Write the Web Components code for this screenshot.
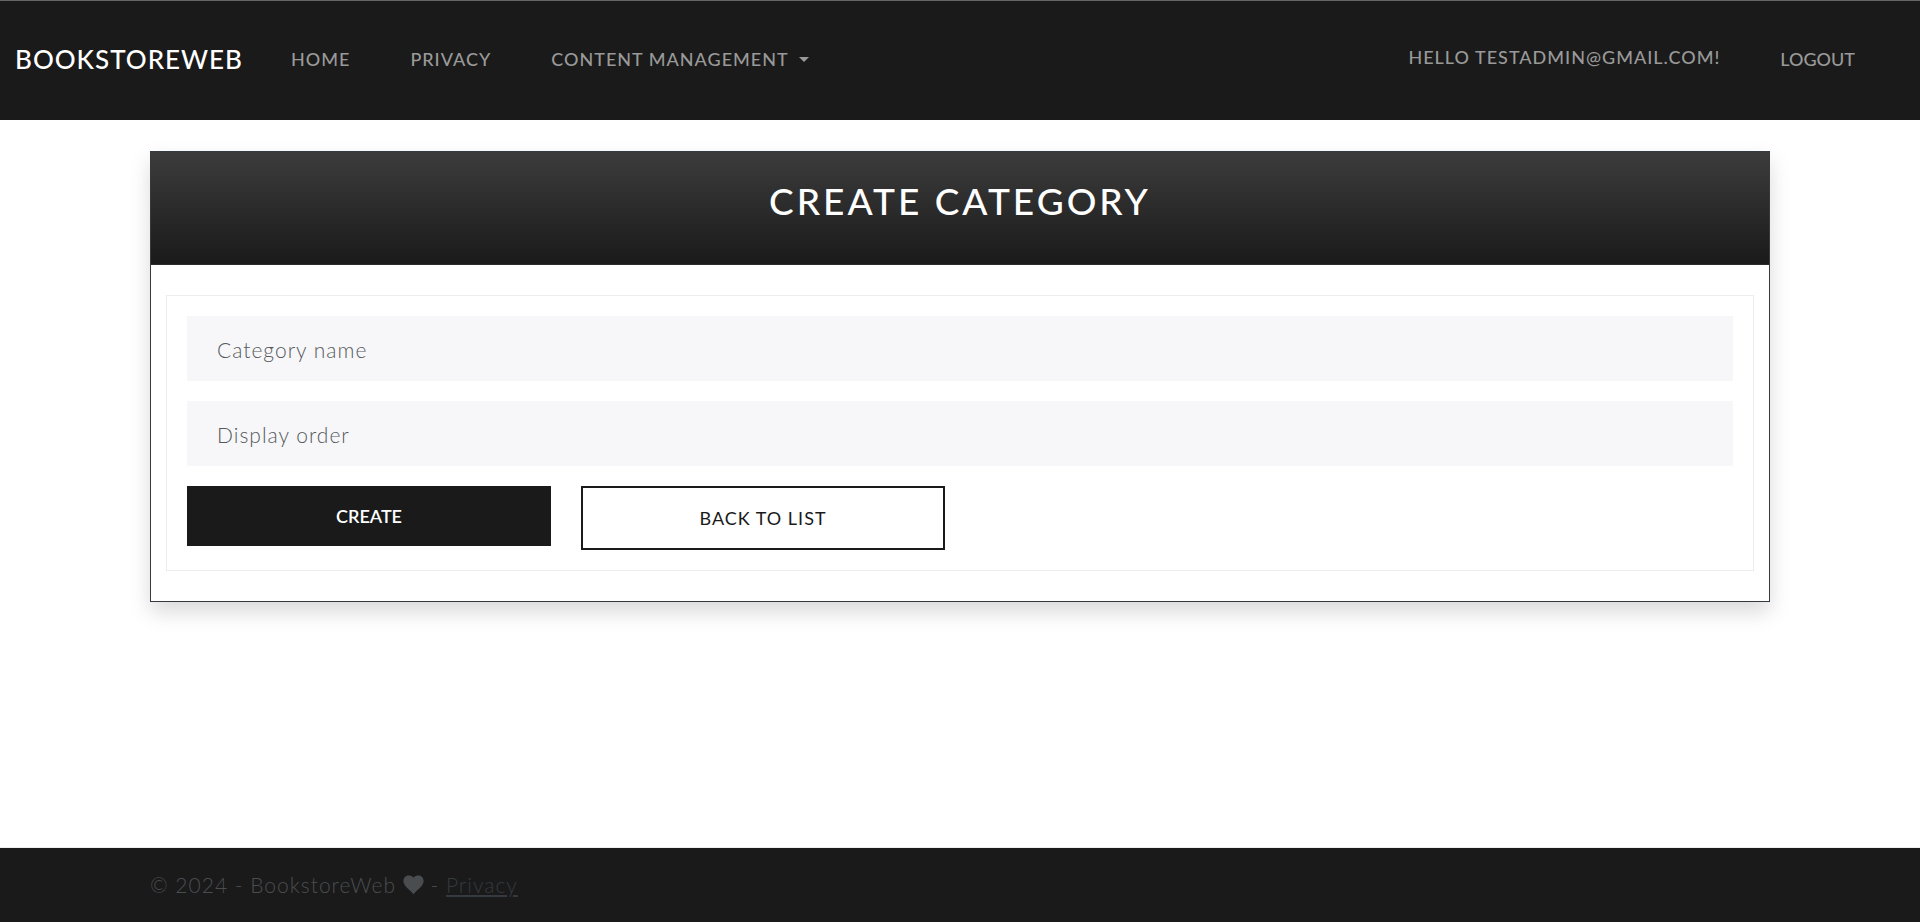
<!DOCTYPE html>
<html lang="en">
<head>
<meta charset="utf-8">
<meta name="viewport" content="width=device-width, initial-scale=1">
<title>Create Category - BookstoreWeb</title>
<style>
  :root { --dark: #1a1a1a; --muted: #999; --slate: #343a40; --family: Lato, "Open Sans", sans-serif; }
  html { height: 100%; }
  body { margin: 0; min-height: 100%; background: #fff; color: #55595c; font: 300 21px/30px var(--family); }
</style>
</head>
<body>
<store-page>
  <store-header slot="header" brand="BOOKSTOREWEB">
    <store-nav-link href="#home">HOME</store-nav-link>
    <store-nav-link href="#privacy">PRIVACY</store-nav-link>
    <store-nav-link href="#content" menu>CONTENT MANAGEMENT</store-nav-link>
    <store-nav-link slot="account" href="#profile" raised>HELLO TESTADMIN@GMAIL.COM!</store-nav-link>
    <store-nav-link slot="account" action>LOGOUT</store-nav-link>
  </store-header>
  <store-card heading="CREATE CATEGORY">
    <category-form></category-form>
  </store-card>
  <store-footer slot="footer"></store-footer>
</store-page>
<script>
class StoreElement extends HTMLElement {
  constructor() {
    super();
    this.attachShadow({ mode: 'open' });
  }
  connectedCallback() {
    this.shadowRoot.innerHTML = '<style>*{box-sizing:border-box}</style>' + this.render();
  }
}

customElements.define('store-page', class extends StoreElement {
  render() {
    return `<style>
      :host { display: flex; flex-direction: column; min-height: 100vh; }
      main { flex: 1; padding: 31px 150px; }
    </style>
    <slot name="header"></slot><main><slot></slot></main><slot name="footer"></slot>`;
  }
});

customElements.define('store-header', class extends StoreElement {
  render() {
    return `<style>
      :host { display: block; background: var(--dark); border-top: 1px solid #666; }
      nav { display: flex; align-items: center; padding: 24px 35px 24px 15px; }
      .brand { color: #fff; font-size: 26px; font-weight: 500; line-height: 36px; letter-spacing: 1px; text-decoration: none; margin-right: 18px; padding-bottom: 4px; }
      .links { display: flex; align-items: center; }
      .account { margin-left: auto; }
    </style>
    <nav>
      <a class="brand" href="#home">${this.getAttribute('brand')}</a>
      <div class="links"><slot></slot></div>
      <div class="links account"><slot name="account"></slot></div>
    </nav>`;
  }
});

customElements.define('store-nav-link', class extends StoreElement {
  render() {
    const style = `<style>
      :host { display: block; }
      a, button { display: flex; align-items: center; gap: 10px; color: var(--muted); font: 500 18px/27px var(--family); padding: 21px 30px 23px; text-decoration: none; white-space: nowrap; }
      a { letter-spacing: 1px; }
      button { background: none; border: 0; letter-spacing: 0; }
      :host([raised]) a { padding: 19px 30px 25px; }
      .caret { border: 5px solid transparent; border-top-color: currentColor; border-bottom: 0; }
    </style>`;
    if (this.hasAttribute('action')) return style + '<button type="button"><slot></slot></button>';
    const caret = this.hasAttribute('menu') ? '<span class="caret"></span>' : '';
    return `${style}<a href="${this.getAttribute('href')}"><slot></slot>${caret}</a>`;
  }
});

customElements.define('store-card', class extends StoreElement {
  render() {
    return `<style>
      :host { display: block; border: 1px solid var(--slate); background: #fff; box-shadow: 0 10px 20px rgba(0, 0, 0, .15); }
      header { padding: 25px 30px 39px; text-align: center; background: linear-gradient(#3c3c3c, var(--dark)); border-bottom: 1px solid #2c2c2c; }
      h1 { margin: 0; color: #fff; font-size: 37px; font-weight: 500; line-height: 48px; letter-spacing: 3px; }
      .body { padding: 30px 15px; }
    </style>
    <header><h1>${this.getAttribute('heading')}</h1></header>
    <div class="body"><slot></slot></div>`;
  }
});

customElements.define('category-form', class extends StoreElement {
  render() {
    return `<style>
      :host { display: block; }
      form { display: grid; gap: 20px; border: 1px solid #ededed; padding: 20px; }
      input { display: block; width: 100%; height: 65px; padding: 2px 30px 0; border: 0; border-radius: 0; background: #f7f7f9; color: #55595c; font: 300 21px/30px var(--family); letter-spacing: 1px; }
      input::placeholder { color: #55595c; opacity: 1; }
      .actions { display: grid; grid-template-columns: repeat(4, 1fr); gap: 30px; align-items: start; }
      .actions > * { font: 600 18px/28px var(--family); padding: 16px 30px; text-align: center; }
      button { background: var(--dark); color: #fff; border: 0; }
      .actions a { border: 2px solid var(--dark); color: var(--dark); font-weight: 400; letter-spacing: 1px; text-decoration: none; }
    </style>
    <form>
      <input type="text" name="name" placeholder="Category name" aria-label="Category name">
      <input type="text" name="order" placeholder="Display order" aria-label="Display order">
      <div class="actions">
        <button type="button">CREATE</button>
        <a href="#list">BACK TO LIST</a>
      </div>
    </form>`;
  }
});

customElements.define('store-footer', class extends StoreElement {
  render() {
    return `<style>
      :host { display: block; background: var(--dark); border-top: 1px solid #eee; color: #4a4d50; letter-spacing: 1px; }
      footer { padding: 22px 150px; }
      svg { width: 21px; height: 20px; vertical-align: -2px; fill: currentColor; }
      a { color: var(--slate); text-decoration: underline; }
    </style>
    <footer>© 2024 - BookstoreWeb <svg viewBox="0 0 21 20" aria-hidden="true"><path d="M10.500 2.500C11.700 1 13.500 .4 15.500 .4C18.700 .4 20.600 3 20.600 6C20.600 11.200 14.500 14.300 10.500 19.300C6.500 14.300 .4 11.200 .4 6C.4 3 2.300 .4 5.500 .4C7.500 .4 9.300 1 10.500 2.500Z"/></svg> - <a href="#privacy">Privacy</a></footer>`;
  }
});
</script>
</body>
</html>
